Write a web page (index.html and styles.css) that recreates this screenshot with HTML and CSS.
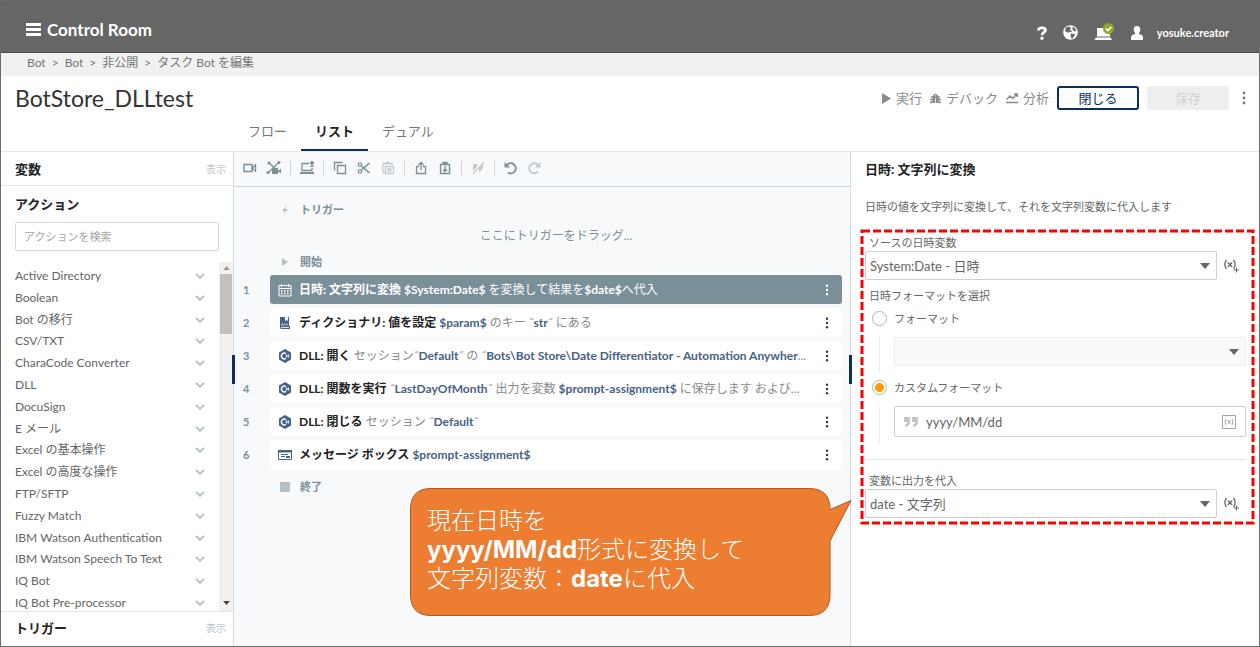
FILE: index.html
```html
<!DOCTYPE html>
<html lang="ja">
<head>
    <meta charset="UTF-8">
    <meta name="viewport" content="width=device-width, initial-scale=1.0">
    <title>Control Room - BotStore_DLLtest</title>
    <link rel="stylesheet" href="styles.css">
</head>
<body>

    <!-- Shared icons -->
    <svg class="icon-defs" aria-hidden="true">
        <symbol id="chevron" viewBox="0 0 10 6"><path d="M1 .8l4 4 4-4" fill="none" stroke="currentColor" stroke-width="1.800"/></symbol>
        <symbol id="dots" viewBox="0 0 4 14"><circle cx="2" cy="2" r="1.4"/><circle cx="2" cy="7" r="1.4"/><circle cx="2" cy="12" r="1.4"/></symbol>
        <symbol id="arrow" viewBox="0 0 10 6"><path d="M0 0h10L5 6z"/></symbol>
        <symbol id="dll" viewBox="0 0 14 14">
            <path d="M7 0l6 3.5v7L7 14l-6-3.500v-7z"/>
            <path d="M8 4.800A2.800 2.800 0 1 0 8 9.200" fill="none" stroke="#fff" stroke-width="1.400"/>
            <path d="M8.500 5.500v3M10.500 5.500v3M7.600 6.300h3.800M7.600 7.700h3.800" stroke="#fff" stroke-width=".6"/>
        </symbol>
        <symbol id="variable" viewBox="0 0 16 14">
            <path d="M2.500 1Q-.8 5.500 2.500 10M9.500 1q3.300 4.500 0 9M3.800 3.500l4.400 4.500M8.200 3.500L3.800 8" fill="none" stroke="currentColor" stroke-width="1.300"/>
            <path d="M12.500 8.500v5M10 11h5" stroke="currentColor"/>
        </symbol>
    </svg>

    <header class="top-bar">
        <button class="menu-button" type="button">
            <svg width="15" height="13" viewBox="0 0 15 13"><path d="M0 1.500h15M0 6.500h15M0 11.500h15" stroke="#fff" stroke-width="3"/></svg>
            Control Room
        </button>
        <div class="top-icons">
            <button type="button" aria-label="ヘルプ"><svg width="10" height="14" viewBox="0 0 10 14"><path d="M1.500 4.500C1.500 1 8.500 1 8.500 4c0 2.500-3.500 2.300-3.500 5.200" fill="none" stroke="#fff" stroke-width="2.800"/><circle cx="5" cy="12.200" r="1.700" fill="#fff"/></svg></button>
            <button type="button" aria-label="言語"><svg width="15" height="15" viewBox="0 0 15 15"><circle cx="7.500" cy="7.500" r="7.300" fill="#fff"/><path d="M3 2.500l3-1 2 1.500-1 2 2 1-1 1.500-2-1-1 1.500-3-2zM9.500 2l2 .5 2 3.500-2 .5-2-2zM8 8.500l4 .5-1 2.500-2 2.500-1.500-3z" fill="#666"/></svg></button>
            <button type="button" aria-label="デバイス"><svg width="20" height="20" viewBox="0 0 20 20"><path d="M3 5h13v8.500H3zM2 14.500h14.500l1.500 2.500H.5z" fill="#fff"/><circle cx="14.500" cy="5.500" r="5.500" fill="#94a52c"/><path d="M11.800 5.500l2 2 3.500-3.500" fill="none" stroke="#fff" stroke-width="1.700"/></svg></button>
            <button type="button" class="user"><svg width="14" height="14" viewBox="0 0 14 14"><path d="M7 0c2.500 0 3.600 2 3.200 4.300-.2 1.500-.7 2.200-1.200 2.700v1c2 .6 4 1 4 3.500V14H1v-2.500C1 9 3 8.600 5 8V7C4.500 6.500 4 5.800 3.800 4.300 3.400 2 4.500 0 7 0z" fill="#fff"/></svg><span>yosuke.creator</span></button>
        </div>
    </header>

    <nav class="breadcrumb">
        <a href="#">Bot</a><span>&gt;</span><a href="#">Bot</a><span>&gt;</span><a href="#">非公開</a><span>&gt;</span><a href="#">タスク Bot を編集</a>
    </nav>

    <div class="title-bar">
        <div class="title-row">
            <h1>BotStore_DLLtest</h1>
            <div class="bot-actions">
                <button class="text-button" type="button"><svg width="9" height="11" viewBox="0 0 9 11"><path d="M0 0l9 5.500L0 11z"/></svg>実行</button>
                <button class="text-button" type="button"><svg width="11" height="11" viewBox="0 0 11 11"><path d="M2.500 3.500h6V10h-6z"/><path d="M3.500 3q2-3 4 0M0 6.500h11M1 4h9M1 10.500V9h9v1.500" fill="none" stroke="#8a8a8a" stroke-width="1.400"/><path d="M5.500 5v5" stroke="#fff" stroke-width=".8"/></svg>デバック</button>
                <button class="text-button" type="button"><svg width="12" height="11" viewBox="0 0 12 11"><path d="M.5 6.500L4 3l2.500 2.500L11 1M8 1h3.200v3M0 9.500h12" fill="none" stroke="#8a8a8a" stroke-width="1.500"/></svg>分析</button>
                <button class="close-button" type="button">閉じる</button>
                <button class="save-button" type="button" disabled>保存</button>
                <button class="more-button" type="button" aria-label="その他"><svg width="4" height="14"><use href="#dots"/></svg></button>
            </div>
        </div>
        <div class="tabs">
            <button type="button">フロー</button>
            <button type="button" class="active">リスト</button>
            <button type="button">デュアル</button>
        </div>
    </div>

    <main class="workspace">
        <aside class="sidebar">
            <div class="side-heading bordered"><h2>変数</h2><button type="button">表示</button></div>
            <div class="side-heading actions-heading"><h2>アクション</h2></div>
            <input class="search" type="text" placeholder="アクションを検索" aria-label="アクションを検索">
            <div class="action-scroll">
                <ul class="action-list">
                    <li>Active Directory<svg><use href="#chevron"/></svg></li>
                    <li>Boolean<svg><use href="#chevron"/></svg></li>
                    <li>Bot の移行<svg><use href="#chevron"/></svg></li>
                    <li>CSV/TXT<svg><use href="#chevron"/></svg></li>
                    <li>CharaCode Converter<svg><use href="#chevron"/></svg></li>
                    <li>DLL<svg><use href="#chevron"/></svg></li>
                    <li>DocuSign<svg><use href="#chevron"/></svg></li>
                    <li>E メール<svg><use href="#chevron"/></svg></li>
                    <li>Excel の基本操作<svg><use href="#chevron"/></svg></li>
                    <li>Excel の高度な操作<svg><use href="#chevron"/></svg></li>
                    <li>FTP/SFTP<svg><use href="#chevron"/></svg></li>
                    <li>Fuzzy Match<svg><use href="#chevron"/></svg></li>
                    <li>IBM Watson Authentication<svg><use href="#chevron"/></svg></li>
                    <li>IBM Watson Speech To Text<svg><use href="#chevron"/></svg></li>
                    <li>IQ Bot<svg><use href="#chevron"/></svg></li>
                    <li>IQ Bot Pre-processor<svg><use href="#chevron"/></svg></li>
                </ul>
                <div class="scrollbar">
                    <svg class="up" width="7" height="4" viewBox="0 0 10 6"><path d="M0 6h10L5 0z"/></svg>
                    <div class="thumb"></div>
                    <svg class="down" width="7" height="4"><use href="#arrow"/></svg>
                </div>
            </div>
            <div class="side-heading side-footer"><h2>トリガー</h2><button type="button">表示</button></div>
        </aside>

        <section class="editor">
            <span class="handle handle-left"></span>
            <span class="handle handle-right"></span>
            <div class="toolbar">
                <button type="button" aria-label="記録"><svg viewBox="0 0 16 16"><path d="M2 4.500h8v7H2zM10 8l3.500-3v6z" fill="none" stroke="currentColor" stroke-width="1.400"/></svg></button>
                <button type="button" aria-label="スマート記録"><svg viewBox="0 0 16 16"><path d="M3 3l10 9M13 2L4 11M1 13l4-3" stroke="currentColor" stroke-width="1.200"/><circle cx="3" cy="3" r="1.500"/><circle cx="13" cy="2.500" r="1.500"/><circle cx="2" cy="12.500" r="1.500"/><path d="M6 8h6v6H6zM12 11l3-2.500v5z"/></svg></button>
                <i></i>
                <button type="button" aria-label="デバイス"><svg viewBox="0 0 16 16"><path d="M10 3.500H3v7h10V8" fill="none" stroke="currentColor" stroke-width="1.300"/><path d="M1 12h14v2H1zM11 7c0-2 4-2 4 0z"/><circle cx="13" cy="3" r="2"/></svg></button>
                <i></i>
                <button type="button" aria-label="コピー"><svg viewBox="0 0 16 16"><path d="M5.500 5.500h8v8h-8zM10.500 2.500h-8v8" fill="none" stroke="currentColor" stroke-width="1.300"/></svg></button>
                <button type="button" aria-label="切り取り"><svg viewBox="0 0 16 16"><path d="M13.500 3L5.500 10M13.500 13L5.500 6" stroke="currentColor" stroke-width="1.600"/><circle cx="4" cy="4.500" r="1.700" fill="none" stroke="currentColor" stroke-width="1.200"/><circle cx="4" cy="11.500" r="1.700" fill="none" stroke="currentColor" stroke-width="1.200"/></svg></button>
                <button type="button" disabled aria-label="貼り付け"><svg viewBox="0 0 16 16"><path d="M5 12.500H3v-9h9V5M5.500 6.500h8v7h-8zM6 2.500h3M8 9h3v2H8z" fill="none" stroke="currentColor" stroke-width="1.300"/></svg></button>
                <i></i>
                <button type="button" aria-label="共有クリップボードへ"><svg viewBox="0 0 16 16"><path d="M6 6.500H3.500v7h9v-7H10M8 10V2.500M5.500 5L8 2.500 10.500 5" fill="none" stroke="currentColor" stroke-width="1.300"/></svg></button>
                <button type="button" aria-label="共有から貼り付け"><svg viewBox="0 0 16 16"><path d="M3.500 4.500h9v9h-9zM6 2.500h4V4H6zM8 6v5M6 9.500l2 2 2-2" fill="none" stroke="currentColor" stroke-width="1.400"/></svg></button>
                <i></i>
                <button type="button" disabled aria-label="無効化"><svg viewBox="0 0 16 16"><path d="M3 4h4v3l-4 4zM9 8l4-4v4l-4 5z"/><path d="M3 14L14 2" stroke="currentColor" stroke-width="1.200"/></svg></button>
                <i></i>
                <button type="button" aria-label="元に戻す"><svg viewBox="0 0 16 16"><path d="M4 5a5 5 0 1 1 1 7.500" fill="none" stroke="currentColor" stroke-width="2"/><path d="M1.500 2v5.500H7z"/></svg></button>
                <button type="button" disabled aria-label="やり直し"><svg viewBox="0 0 16 16"><path d="M11 5a5 5 0 1 0 0 6.500" fill="none" stroke="currentColor" stroke-width="2"/><path d="M13.500 2v5.500H8z"/></svg></button>
            </div>

            <div class="flow">
                <div class="marker"><svg viewBox="0 0 12 12"><path d="M7.500 1L3 7h3l-1.500 4L9 5H6z"/></svg>トリガー</div>
                <p class="drop-hint">ここにトリガーをドラッグ...</p>
                <div class="marker start"><svg viewBox="0 0 12 12"><path d="M3 2l6 4-6 4z"/></svg>開始</div>
                <ol class="steps">
                    <li>
                        <span class="number">1</span>
                        <div class="step selected">
                            <svg class="step-icon" viewBox="0 0 14 14"><path d="M1 2.500h12v10.500H1zM1 5.500h12M3.500 1v3M10.500 1v3" fill="none" stroke="#fff"/><path d="M3 8h8M3 10.500h8" stroke="#fff" stroke-width="1.500" stroke-dasharray="1.500 1.500"/></svg>
                            <p><b>日時: 文字列に変換</b> <em>$System:Date$</em> を変換して結果を<em>$date$</em>へ代入</p>
                            <button type="button" aria-label="メニュー"><svg><use href="#dots"/></svg></button>
                        </div>
                    </li>
                    <li>
                        <span class="number">2</span>
                        <div class="step">
                            <svg class="step-icon" viewBox="0 0 14 14"><path d="M2 1h9v9h1v3H3a2 2 0 0 1-1-2z"/><path d="M7 1v4l1.500-1L10 5V1" fill="#fff"/><path d="M3.500 9.500l1-2 1 2M7 9.500v-2M9 9.500v-2M3 11.500h8" fill="none" stroke="#fff" stroke-width=".8"/></svg>
                            <p><b>ディクショナリ: 値を設定</b> <em>$param$</em> のキー ˝<em>str</em>˝ にある</p>
                            <button type="button" aria-label="メニュー"><svg><use href="#dots"/></svg></button>
                        </div>
                    </li>
                    <li>
                        <span class="number">3</span>
                        <div class="step">
                            <svg class="step-icon"><use href="#dll"/></svg>
                            <p><b>DLL: 開く</b> セッション˝<em>Default</em>˝ の ˝<em>Bots\Bot Store\Date Differentiator - Automation Anywher</em>...</p>
                            <button type="button" aria-label="メニュー"><svg><use href="#dots"/></svg></button>
                        </div>
                    </li>
                    <li>
                        <span class="number">4</span>
                        <div class="step">
                            <svg class="step-icon"><use href="#dll"/></svg>
                            <p><b>DLL: 関数を実行</b> ˝<em>LastDayOfMonth</em>˝ 出力を変数 <em>$prompt-assignment$</em> に保存します および...</p>
                            <button type="button" aria-label="メニュー"><svg><use href="#dots"/></svg></button>
                        </div>
                    </li>
                    <li>
                        <span class="number">5</span>
                        <div class="step">
                            <svg class="step-icon"><use href="#dll"/></svg>
                            <p><b>DLL: 閉じる</b> セッション ˝<em>Default</em>˝</p>
                            <button type="button" aria-label="メニュー"><svg><use href="#dots"/></svg></button>
                        </div>
                    </li>
                    <li>
                        <span class="number">6</span>
                        <div class="step">
                            <svg class="step-icon" viewBox="0 0 14 14"><path d="M.5 2.500h13v9H.5z" fill="#fff" stroke="currentColor"/><path d="M0 2h14v2.500H0zM3 6h7v1H3zM3 8h4v1H3zM8 8h4v2H8z"/></svg>
                            <p><b>メッセージ ボックス</b> <em>$prompt-assignment$</em></p>
                            <button type="button" aria-label="メニュー"><svg><use href="#dots"/></svg></button>
                        </div>
                    </li>
                </ol>
                <div class="marker end"><svg viewBox="0 0 12 12"><path d="M1 1h10v10H1z"/></svg>終了</div>
            </div>

            <div class="callout">
                <svg viewBox="0 0 442 128"><path d="M21 .5H399Q420 .5 420 21.500L441 12.500 420 53V106.500Q420 127.500 399 127.500H21Q.5 127.500 .5 106.500V21.500Q.5 .5 21 .5z" fill="#ed7d31" stroke="#ae5a21"/></svg>
                <p>現在日時を<br><b>yyyy/MM/dd</b>形式に変換して<br>文字列変数：<b>date</b>に代入</p>
            </div>
        </section>

        <section class="properties">
            <h2>日時: 文字列に変換</h2>
            <p class="description">日時の値を文字列に変換して、それを文字列変数に代入します</p>

            <form class="fields">
                <svg class="outline"><rect x="2" y="2" width="100%" height="100%"/></svg>
                <label class="field-label" for="source">ソースの日時変数</label>
                <div class="field-row">
                    <div class="select-box">
                        <select id="source"><option>System:Date - 日時</option></select>
                        <svg><use href="#arrow"/></svg>
                    </div>
                    <button class="variable-button" type="button" aria-label="変数を追加"><svg><use href="#variable"/></svg></button>
                </div>

                <p class="field-label group-label">日時フォーマットを選択</p>
                <label class="radio"><input type="radio" name="format">フォーマット</label>
                <div class="nested">
                    <div class="select-box disabled">
                        <select disabled aria-label="フォーマット"><option></option></select>
                        <svg><use href="#arrow"/></svg>
                    </div>
                </div>
                <label class="radio"><input type="radio" name="format" checked>カスタムフォーマット</label>
                <div class="nested">
                    <div class="text-box">
                        <svg width="14" height="10" viewBox="0 0 14 10"><path d="M0 0h6v5q0 4-5 5V8q2-1 2-3H0zM8 0h6v5q0 4-5 5V8q2-1 2-3H8z" fill="#c4c4c4"/></svg>
                        <input type="text" value="yyyy/MM/dd" aria-label="カスタムフォーマット">
                        <svg width="14" height="14" viewBox="0 0 14 14"><path d="M.5 .5h13v13H.5zM4 4q-2 3 0 6M10 4q2 3 0 6M5.500 5l3 4M8.500 5l-3 4" fill="none" stroke="#a5a5a5"/></svg>
                    </div>
                </div>

                <hr>
                <label class="field-label" for="output">変数に出力を代入</label>
                <div class="field-row">
                    <div class="select-box">
                        <select id="output"><option>date - 文字列</option></select>
                        <svg><use href="#arrow"/></svg>
                    </div>
                    <button class="variable-button" type="button" aria-label="変数を追加"><svg><use href="#variable"/></svg></button>
                </div>
            </form>
        </section>
    </main>

</body>
</html>
```
FILE: styles.css
```css
* {
    box-sizing: border-box;
}
body {
    margin: 0;
    height: 100vh;
    display: flex;
    flex-direction: column;
    border: 1px solid #6b6b6b;
    font-family: Lato, "Noto Sans CJK JP", sans-serif;
    font-size: 13px;
    line-height: 20px;
    color: #666;
    background-color: #fff;
}
button, input, select {
    font: inherit;
    color: inherit;
}
button {
    padding: 0;
    border: none;
    background: none;
    cursor: pointer;
}
h1, h2, p, ul, ol {
    margin: 0;
    padding: 0;
}
svg {
    display: block;
    flex-shrink: 0;
    fill: currentColor;
}
.icon-defs {
    position: absolute;
    width: 0;
    height: 0;
}

/* Header */
.top-bar {
    display: flex;
    justify-content: space-between;
    height: 52px;
    padding: 0 30px 0 25px;
    border-bottom: 1px solid #4c4c4c;
    background-color: #666;
    color: #fff;
    font-weight: bold;
}
.menu-button {
    display: flex;
    align-items: center;
    gap: 6px;
    padding-top: 6px;
    font-size: 17px;
}
.top-icons {
    display: flex;
    align-items: center;
    gap: 16px;
    padding-top: 12px;
}
.user {
    display: flex;
    align-items: center;
    gap: 13px;
    font-size: 11px;
}
.breadcrumb {
    display: flex;
    align-items: center;
    gap: 6px;
    height: 23px;
    padding: 0 26px 3px;
    background-color: #f1f1f1;
    font-size: 12px;
}
.breadcrumb a {
    color: #777;
    text-decoration: none;
}
.breadcrumb span {
    color: #777;
}

/* Title and tabs */
.title-bar {
    border-bottom: 1px solid #e4e8ec;
}
.title-row {
    display: flex;
    justify-content: space-between;
    align-items: center;
    height: 44px;
    padding: 0 8px 0 14px;
}
h1 {
    font-size: 23px;
    font-weight: normal;
    color: #333;
}
.bot-actions {
    display: flex;
    align-items: center;
    gap: 8px;
}
.text-button {
    display: flex;
    align-items: center;
    gap: 5px;
    color: #8a8a8a;
}
.close-button, .save-button {
    width: 82px;
    height: 24px;
    border-radius: 3px;
}
.close-button {
    border: 2px solid #0c2f60;
    color: #0c2f60;
}
.save-button {
    background-color: #eee;
    color: #d2d2d2;
}
.more-button {
    width: 14px;
    padding: 4px 5px;
    color: #7a7a7a;
}
.tabs {
    display: flex;
    padding-left: 233px;
}
.tabs button {
    height: 31px;
    padding: 0 14px 8px;
    border-bottom: 2px solid transparent;
    color: #777;
}
.tabs .active {
    border-color: #0c2f60;
    color: #222;
    font-weight: bold;
}

/* Workspace */
.workspace {
    flex: 1;
    min-height: 0;
    display: grid;
    grid-template-columns: 232px minmax(0, 1fr) 408px;
}
h2 {
    font-size: 13px;
    color: #222;
}
.sidebar {
    display: flex;
    flex-direction: column;
    min-height: 0;
}
.side-heading {
    display: flex;
    align-items: center;
    justify-content: space-between;
    height: 34px;
    padding: 0 7px 0 14px;
}
.side-heading button {
    font-size: 10px;
    color: #bcc4ca;
}
.bordered {
    border-bottom: 1px solid #e4e8ec;
}
.actions-heading {
    height: 36px;
}
.search {
    height: 29px;
    margin: 0 14px 11px;
    padding: 0 8px;
    border: 1px solid #d8d8d8;
    border-radius: 2px;
    font-size: 11px;
}
.search::placeholder {
    color: #a5a5a5;
}
.action-scroll {
    flex: 1;
    min-height: 0;
    display: flex;
    overflow: hidden;
}
.action-list {
    flex: 1;
    display: flex;
    flex-direction: column;
    margin: 3px 0 -3px;
    padding: 0 14px;
    font-size: 12px;
}
.action-list li {
    flex: 1;
    display: flex;
    align-items: center;
    justify-content: space-between;
}
.action-list svg {
    width: 10px;
    height: 6px;
    color: #b3bfc6;
}
.scrollbar {
    display: flex;
    flex-direction: column;
    align-items: center;
    gap: 4px;
    width: 14px;
    padding: 4px 1px 6px;
    background-color: #f1f1f1;
    color: #444;
}
.scrollbar .up {
    color: #999;
}
.thumb {
    width: 12px;
    height: 60px;
    background-color: #c1c1c1;
}
.scrollbar .down {
    margin-top: auto;
}
.side-footer {
    height: 35px;
    padding-bottom: 3px;
    border-top: 1px solid #e4e4e4;
}

/* Editor */
.editor {
    position: relative;
    border: solid #cfdde8;
    border-width: 0 1px;
    background-color: #f8f9fb;
    color: #7b8f99;
}
.handle {
    position: absolute;
    top: 203px;
    width: 3px;
    height: 29px;
    background-color: #0c2f60;
}
.handle-left {
    left: -2px;
}
.handle-right {
    right: -2px;
}
.toolbar {
    display: flex;
    align-items: center;
    gap: 8px;
    height: 35px;
    padding: 0 0 2px 8px;
    border-bottom: 1px solid #c2d5e3;
}
.toolbar svg {
    width: 16px;
    height: 16px;
}
.toolbar button:disabled {
    color: #c3cbd1;
}
.toolbar i {
    width: 1px;
    height: 14px;
    background-color: #ccd3d8;
}
.flow {
    padding: 13px 8px 0 0;
}
.marker {
    display: flex;
    align-items: center;
    gap: 9px;
    padding-left: 45px;
    font-size: 11px;
    font-weight: bold;
}
.marker svg {
    width: 12px;
    height: 12px;
    color: #b5c1c7;
}
.drop-hint {
    margin: 6px 0;
    padding-left: 36px;
    font-size: 12px;
    text-align: center;
}
.start {
    margin-bottom: 3px;
}
.end {
    margin-top: 8px;
}
.steps {
    display: flex;
    flex-direction: column;
    gap: 4px;
    list-style: none;
}
.steps li {
    display: flex;
    align-items: center;
}
.number {
    width: 36px;
    padding-left: 9px;
    font-size: 11px;
    font-weight: bold;
}
.step {
    flex: 1;
    min-width: 0;
    display: flex;
    align-items: center;
    gap: 7px;
    height: 29px;
    padding: 0 8px;
    border-radius: 3px;
    background-color: #fff;
    color: #466287;
    font-size: 12px;
}
.step-icon {
    width: 14px;
    height: 14px;
}
.step p {
    flex: 1;
    overflow: hidden;
    text-overflow: ellipsis;
    white-space: nowrap;
    color: #8a8a8a;
}
.step b {
    color: #222;
}
.step em {
    font-style: normal;
    font-weight: bold;
    color: #466287;
}
.step button {
    width: 14px;
    padding: 0 5px;
    color: #1e3c66;
}
.step button svg {
    width: 4px;
    height: 12px;
}
.step.selected {
    background-color: #7b8f99;
}
.selected svg, .selected p, .selected b, .selected em, .selected button {
    color: #fff;
}

/* Callout */
.callout {
    position: absolute;
    left: 176px;
    bottom: 30px;
    width: 442px;
    z-index: 1;
    font-family: Inter, "Noto Sans CJK JP", sans-serif;
    font-size: 24px;
    line-height: 29px;
    font-weight: 300;
    color: #fff;
}
.callout p {
    position: absolute;
    top: 18px;
    left: 17px;
    white-space: nowrap;
}
.callout b {
    font-weight: 700;
}

/* Properties */
.properties {
    padding: 7px 6px 0 11px;
}
.properties h2, .description {
    padding-left: 3px;
}
.description {
    margin: 18px 0 14px;
    font-size: 11px;
}
.fields {
    position: relative;
    padding: 3px 7px 5px 3px;
}
.outline {
    position: absolute;
    top: -2px;
    left: -2px;
    width: calc(100% + 4px);
    height: calc(100% + 4px);
    overflow: hidden;
    pointer-events: none;
}
.outline rect {
    width: calc(100% - 4px);
    height: calc(100% - 4px);
    fill: none;
    stroke: #f00;
    stroke-width: 3px;
    stroke-dasharray: 8 3;
}
.field-label {
    display: block;
    padding-left: 4px;
    font-size: 11px;
    line-height: 17px;
}
.field-row {
    display: flex;
    align-items: center;
    gap: 7px;
}
.select-box {
    position: relative;
    flex: 1;
}
.select-box select {
    display: block;
    width: 100%;
    height: 29px;
    padding: 0 4px;
    border: 1px solid #cfcfcf;
    border-radius: 2px;
    background-color: #fff;
    appearance: none;
}
.select-box svg {
    position: absolute;
    top: 12px;
    right: 7px;
    width: 10px;
    height: 6px;
    pointer-events: none;
}
.select-box.disabled select {
    border-color: #e8e8e8;
    background-color: #f7f7f7;
}
.variable-button svg {
    width: 16px;
    height: 14px;
}
.variable-button {
    margin-right: 6px;
}
.group-label {
    margin-top: 7px;
}
.radio {
    display: flex;
    align-items: center;
    gap: 7px;
    height: 29px;
    padding-left: 7px;
    font-size: 11px;
}
.radio input {
    width: 15px;
    height: 15px;
    margin: 0;
    border: 1px solid #b5b5b5;
    border-radius: 50%;
    background-color: #fff;
    appearance: none;
}
.radio input:checked {
    background: radial-gradient(circle, #ff9c00 4px, #fff 5px);
}
.nested {
    margin: 4px 0 0 14px;
    padding: 0 0 7px 14px;
    border-left: 1px solid #ececec;
}
.text-box {
    display: flex;
    align-items: center;
    gap: 8px;
    height: 31px;
    padding: 0 9px;
    border: 1px solid #cfcfcf;
    border-radius: 2px;
}
.text-box input {
    flex: 1;
    min-width: 0;
    padding: 0;
    border: none;
    outline: none;
}
hr {
    margin: 15px 0 12px;
    border: none;
    border-top: 1px solid #e6e6e6;
}
```
